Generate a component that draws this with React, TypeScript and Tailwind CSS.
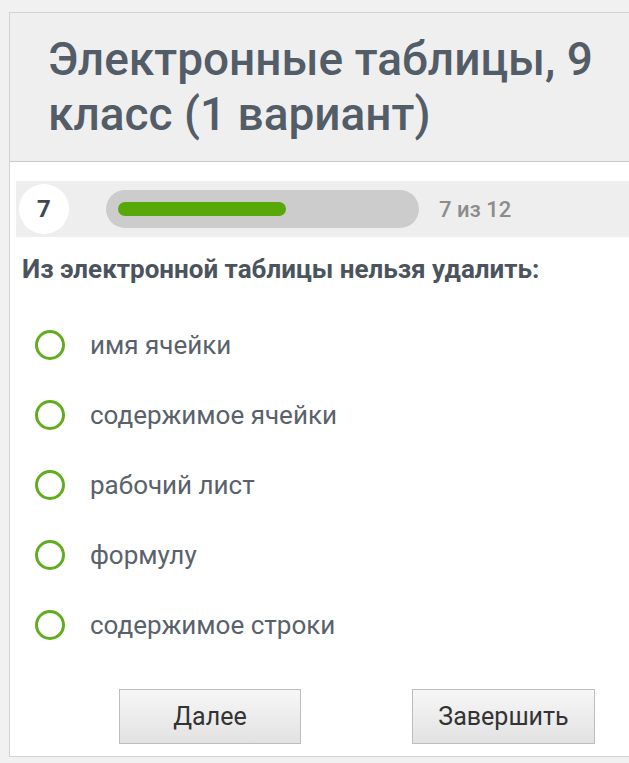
const options = [
  "имя ячейки",
  "содержимое ячейки",
  "рабочий лист",
  "формулу",
  "содержимое строки",
];

const Radio: React.FC = () => (
  <span className="block w-[30px] h-[30px] rounded-full border-[3px] border-[#62ad1f] shrink-0" />
);

const App: React.FC = () => {
  return (
    <div
      className="w-[629px] h-[763px] overflow-hidden bg-[#f1f1f1] pt-[12px] pl-[9px]"
      style={{ fontFamily: "Roboto, 'Noto Sans', sans-serif" }}
    >
      <div className="w-[660px] h-[745px] bg-white border border-[#d2d2d2] flex flex-col">
        <div className="bg-[#efefef] border-b border-[#cbcbcb] pl-[38px] pt-[19px] pb-[19px]">
          <h1 className="text-[46px] leading-[55px] text-[#535d67] font-medium">
            Электронные таблицы, 9<br />
            класс (1 вариант)
          </h1>
        </div>

        <div className="mt-[19px] ml-[6px] h-[56px] bg-[#eeeeee] flex items-center pl-[3px]">
          <div className="w-[50px] h-[50px] rounded-full bg-white flex items-center justify-center text-[24px] font-bold text-[#3f4850]">
            7
          </div>
          <div className="ml-[37px] w-[313px] h-[38px] rounded-full bg-[#cccccc] flex items-center px-[12px]">
            <div className="w-[168px] h-[14px] rounded-full bg-[#58a80a]" />
          </div>
          <span className="ml-[20px] text-[22px] font-medium text-[#8c8c8c]">7 из 12</span>
        </div>

        <p className="mt-[18px] pl-[12px] text-[26px] leading-[28px] font-bold text-[#4b545d]">
          Из электронной таблицы нельзя удалить:
        </p>

        <div className="mt-[27px] flex flex-col">
          {options.map((o) => (
            <label key={o} className="h-[70px] flex items-center pl-[25px] gap-[25px]">
              <Radio />
              <span className="text-[26px] text-[#59626b]">{o}</span>
            </label>
          ))}
        </div>

        <div className="mt-[29px] flex pl-[109px] gap-[111px]">
          <button className="w-[182px] h-[55px] border border-[#bdbdbd] bg-gradient-to-b from-[#f7f7f7] to-[#e2e2e2] text-[25px] text-[#333]">
            Далее
          </button>
          <button className="w-[183px] h-[55px] border border-[#bdbdbd] bg-gradient-to-b from-[#f7f7f7] to-[#e2e2e2] text-[25px] text-[#333]">
            Завершить
          </button>
        </div>
      </div>
    </div>
  );
};

export default App;
